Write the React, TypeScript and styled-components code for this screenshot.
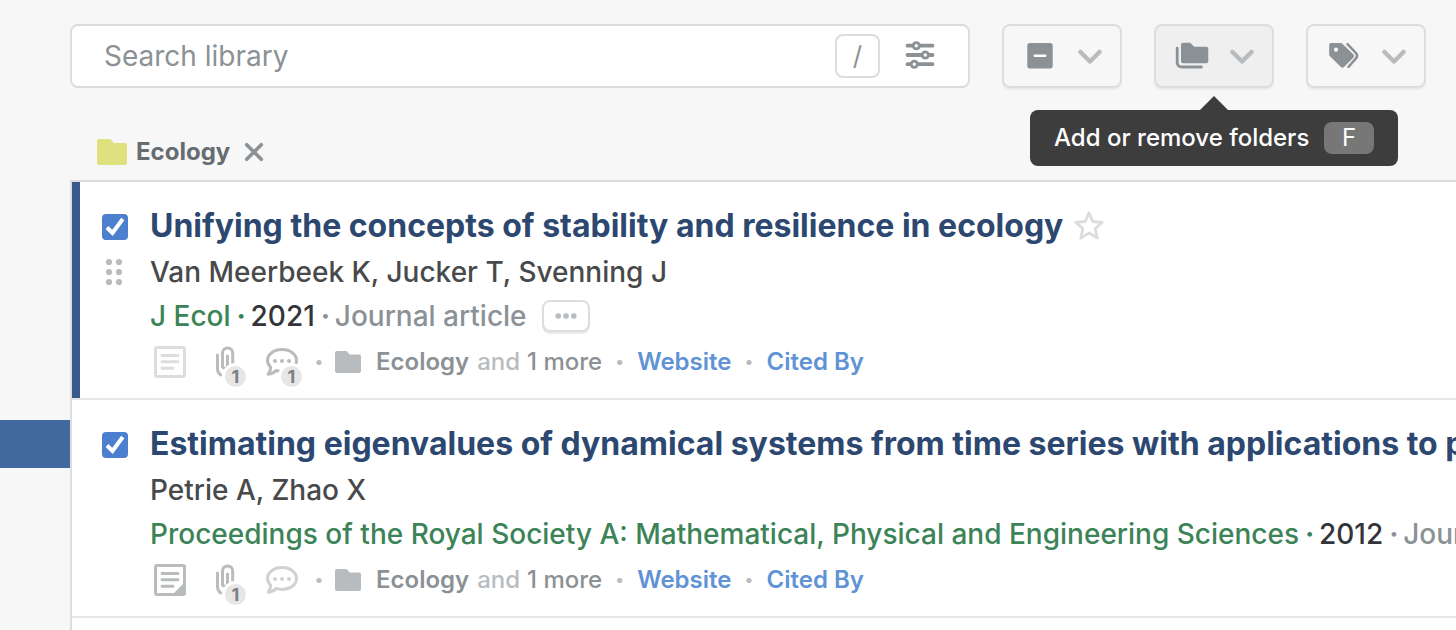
import React from "react";
import styled, { createGlobalStyle } from "styled-components";

const color = {
  page: "#f7f7f7",
  border: "#dddddd",
  grey: "#8b9195",
  light: "#b8bcbf",
  faint: "#dcdddd",
  link: "#5f93d6",
};

const GlobalStyle = createGlobalStyle`
  *, *::before, *::after { box-sizing: border-box; }
  body {
    margin: 0;
    background: ${color.page};
    font-family: Inter, "Liberation Sans", sans-serif;
    overflow: hidden;
  }
  button, input { font: inherit; }
  svg { display: block; flex: none; }
`;

const Page = styled.div`
  display: flex;
  min-height: 100vh;
`;

const Sidebar = styled.nav`
  flex: none;
  width: 70px;
  padding-top: 420px;
`;

const SelectedItem = styled.a`
  display: block;
  height: 48px;
  background: #41689f;
`;

const Main = styled.main`
  display: flex;
  flex-direction: column;
  flex: 1;
  min-width: 0;
`;

const Toolbar = styled.header`
  display: flex;
  gap: 32px;
  padding: 24px 30px 0 0;
`;

const SearchField = styled.div`
  display: flex;
  flex: 1;
  align-items: center;
  min-width: 0;
  height: 64px;
  padding: 0 33px 0 32px;
  background: #fff;
  border: 2px solid ${color.border};
  border-radius: 8px;
`;

const SearchInput = styled.input`
  flex: 1;
  min-width: 0;
  padding: 0;
  border: 0;
  outline: 0;
  background: transparent;
  font-size: 28px;
  line-height: 40px;
  color: #34353a;
  &::placeholder { color: ${color.grey}; opacity: 1; }
`;

const SlashKey = styled.kbd`
  display: grid;
  place-items: center;
  width: 45px;
  height: 44px;
  margin-right: 25px;
  border: 2px solid ${color.border};
  border-radius: 8px;
  font-family: inherit;
  font-size: 26px;
  line-height: 32px;
  color: ${color.grey};
`;

const IconButton = styled.button`
  display: grid;
  place-items: center;
  flex: none;
  padding: 0;
  border: 0;
  background: transparent;
`;

const MenuAnchor = styled.div`
  position: relative;
  flex: none;
`;

const MenuButton = styled.button<{ $active?: boolean }>`
  display: flex;
  align-items: center;
  gap: 20px;
  width: 120px;
  height: 64px;
  padding: 0 18px;
  border: 2px solid ${color.border};
  border-radius: 8px;
  background: ${(p) => (p.$active ? "#efefef" : color.page)};
  box-shadow: 0 2px 0 #ebebeb;
`;

const Tooltip = styled.div`
  position: absolute;
  z-index: 1;
  top: calc(100% + 22px);
  left: 50%;
  display: flex;
  align-items: center;
  justify-content: space-between;
  width: 368px;
  height: 56px;
  padding: 0 24px;
  transform: translateX(-50%);
  border-radius: 8px;
  background: #3d3d3d;
  color: #fff;
  font-size: 24px;
  font-weight: 500;
  line-height: 32px;
  white-space: nowrap;
  &::before {
    content: "";
    position: absolute;
    bottom: 100%;
    left: 50%;
    margin-left: -14px;
    border: 14px solid transparent;
    border-top: 0;
    border-bottom-color: #3d3d3d;
  }
`;

const TooltipKey = styled.kbd`
  width: 50px;
  border-radius: 8px;
  background: #777;
  font-family: inherit;
  font-weight: 400;
  text-align: center;
`;

const FilterBar = styled.div`
  display: flex;
  align-items: center;
  height: 56px;
  margin-top: 36px;
  padding-left: 27px;
`;

const FilterName = styled.span`
  margin: 0 14px 0 9px;
  font-size: 24px;
  font-weight: 700;
  line-height: 32px;
  color: #666c70;
`;

const List = styled.ul`
  flex: 1;
  margin: 0;
  padding: 0;
  list-style: none;
  background: #fff;
  border: solid ${color.border};
  border-width: 2px 0 0 2px;
`;

const Row = styled.li<{ $focused?: boolean }>`
  display: flex;
  border-bottom: 2px solid #e6e6e6;
  background: linear-gradient(#3a5a8c, #3a5a8c) no-repeat 0 0 /
    ${(p) => (p.$focused ? "8px" : "0")} 100%;
`;

const Gutter = styled.div`
  display: flex;
  flex-direction: column;
  align-items: center;
  flex: none;
  gap: 18px;
  width: 26px;
  margin: 32px 22px 0 30px;
`;

const CheckWrap = styled.label`
  display: grid;
  width: 26px;
  height: 26px;
  > * { grid-area: 1 / 1; }
  svg { z-index: 1; pointer-events: none; }
`;

const CheckInput = styled.input`
  appearance: none;
  width: 26px;
  height: 26px;
  margin: 0;
  border: 2px solid ${color.light};
  border-radius: 4px;
  &:checked { border-color: #4c80cf; background: #4c80cf; }
  &:not(:checked) + svg { display: none; }
`;

const Body = styled.div`
  flex: 1;
  min-width: 0;
  padding: 22px 0 12px;
  overflow: hidden;
  white-space: nowrap;
`;

const TitleLine = styled.div`
  display: flex;
  align-items: center;
  gap: 11px;
  height: 44px;
  margin-bottom: 2px;
`;

const Title = styled.h2`
  margin: 0;
  font-size: 32px;
  font-weight: 700;
  line-height: 44px;
  color: #2c4870;
`;

const Authors = styled.div`
  font-size: 28px;
  font-weight: 500;
  line-height: 44px;
  color: #47494b;
`;

const Source = styled.div`
  display: flex;
  align-items: center;
  gap: 6px;
  height: 44px;
  font-size: 28px;
  font-weight: 500;
  line-height: 44px;
  color: ${color.grey};
`;

const Journal = styled.span`
  color: #3c8357;
`;

const SourceDot = styled.span<{ $green?: boolean }>`
  width: 8px;
  font-weight: 700;
  text-align: center;
  color: ${(p) => (p.$green ? "#3c8357" : color.grey)};
`;

const Year = styled.span`
  color: #34353a;
`;

const MoreButton = styled.button`
  display: grid;
  place-items: center;
  width: 48px;
  height: 32px;
  margin-left: 9px;
  padding: 0;
  border: 2px solid ${color.border};
  border-radius: 8px;
  background: #fff;
  box-shadow: 0 2px 0 #ebebeb;
`;

const Meta = styled.div`
  display: flex;
  align-items: center;
  height: 48px;
  padding-left: 4px;
  font-size: 24px;
  font-weight: 500;
  line-height: 32px;
  color: ${color.light};
`;

const MetaIcons = styled.div`
  display: flex;
  gap: 24px;
  margin-right: 16px;
`;

const BadgeAnchor = styled.span`
  position: relative;
  display: flex;
`;

const Badge = styled.span`
  position: absolute;
  left: 12px;
  top: 17px;
  width: 27px;
  height: 27px;
  border: 3px solid #fff;
  border-radius: 50%;
  background: #e6e6e6;
  font-size: 18px;
  font-weight: 700;
  line-height: 22px;
  text-align: center;
  color: #7b8185;
`;

const FolderLabel = styled.span`
  margin: 0 8px 0 15px;
  font-weight: 600;
  color: ${color.grey};
`;

const MoreLabel = styled.span`
  margin-left: 7px;
  color: ${color.grey};
`;

const Dot = styled.span`
  width: 35px;
  font-size: 28px;
  font-weight: 800;
  text-align: center;
`;

const LeadDot = styled(Dot)`
  width: 8px;
  margin-right: 13px;
`;

const MetaLink = styled.a`
  font-weight: 600;
  text-decoration: none;
  color: ${color.link};
`;

const Chevron = () => (
  <svg width="24" height="24" viewBox="0 0 24 24" fill="none" stroke={color.light} strokeWidth="4.5" strokeLinecap="round" strokeLinejoin="round">
    <path d="M2.5 8 12 17.500 21.500 8" />
  </svg>
);

const SlidersIcon = () => (
  <svg width="30" height="30" viewBox="0 0 30 30" stroke={color.grey} fill="#fff">
    <path d="M2.500 4.700H27.500M2.500 14H27.500M2.500 23.200H27.500" strokeWidth="3.800" strokeLinecap="round" />
    <g strokeWidth="2.800">
      <circle cx="11.300" cy="4.700" r="3.100" />
      <circle cx="20.300" cy="14" r="3.100" />
      <circle cx="9.300" cy="23.200" r="3.100" />
    </g>
  </svg>
);

const SelectIcon = () => (
  <svg width="36" height="28" viewBox="0 0 36 28">
    <rect x="5.300" y="1" width="25.400" height="25.600" rx="2.800" fill={color.grey} />
    <path d="M12.800 13.800H23.200" stroke="#fff" strokeWidth="2.600" strokeLinecap="round" />
  </svg>
);

const FoldersIcon = () => (
  <svg width="36" height="28" viewBox="0 0 36 28">
    <path d="M9 .7h7.200l4 4.100H32.300a2 2 0 0 1 2 2V19.300a2 2 0 0 1-2 2H9a2 2 0 0 1-2-2V2.700a2 2 0 0 1 2-2Z" fill={color.grey} />
    <path d="M3.200 6.200V20.500a4.500 4.500 0 0 0 4.500 4.500H27.400" fill="none" stroke={color.grey} strokeWidth="2.800" strokeLinecap="round" />
  </svg>
);

const TagsIcon = () => (
  <svg width="36" height="28" viewBox="0 0 36 28">
    <path fillRule="evenodd" d="M5 1H14.500Q15.800 1 16.700 1.900L27.500 12.500Q28.900 14 27.500 15.500L18 25Q16.500 26.500 15 25L4.200 14.600Q3.200 13.600 3.200 12.300V3Q3.200 1 5 1ZM10 5.600a2.100 2.100 0 1 0 0 4.200 2.100 2.100 0 0 0 0-4.200Z" fill={color.grey} />
    <path d="M21.500 2.200 30 11.200Q32.300 13.800 30 16.400L22.500 24.800" fill="none" stroke={color.grey} strokeWidth="2.500" strokeLinecap="round" />
  </svg>
);

const FolderIcon = ({ width, height, fill }: { width: number; height: number; fill: string }) => (
  <svg width={width} height={height} viewBox="0 0 30 26" preserveAspectRatio="none" fill={fill}>
    <path d="M2.300 0H12.500Q13.600 0 14.400 1L16.800 4H27.700Q30 4 30 6.300V23.700Q30 26 27.700 26H2.300Q0 26 0 23.700V2.300Q0 0 2.300 0Z" />
  </svg>
);

const CloseIcon = () => (
  <svg width="20" height="20" viewBox="0 0 20 20" stroke={color.grey} strokeWidth="3.600" strokeLinecap="round">
    <path d="M2.700 2.700 17.300 17.300M17.300 2.700 2.700 17.300" />
  </svg>
);

const CheckIcon = () => (
  <svg width="26" height="26" viewBox="0 0 26 26" fill="none" stroke="#fff" strokeWidth="4">
    <path d="M5 13.500 10.500 19 20.800 5" />
  </svg>
);

const DragIcon = () => (
  <svg width="20" height="28" viewBox="0 0 20 28" fill={color.light}>
    {[4, 14, 24].map((y) => (
      <React.Fragment key={y}>
        <circle cx="4" cy={y} r="3.100" />
        <circle cx="14" cy={y} r="3.100" />
      </React.Fragment>
    ))}
  </svg>
);

const StarIcon = () => (
  <svg width="30" height="30" viewBox="0 0 30 30" fill="none" stroke={color.faint} strokeWidth="2.800" strokeLinejoin="round">
    <path d="M15 1.800 18.800 10.500 28.300 11.300 21.200 17.600 23.300 27 15 22 6.700 27 8.800 17.600 1.700 11.300 11.200 10.500Z" />
  </svg>
);

const EllipsisIcon = () => (
  <svg width="24" height="6" viewBox="0 0 24 6" fill={color.light}>
    <circle cx="4.200" cy="3" r="2.800" />
    <circle cx="12" cy="3" r="2.800" />
    <circle cx="19.800" cy="3" r="2.800" />
  </svg>
);

const NoteIcon = ({ filled }: { filled?: boolean }) => (
  <svg width="32" height="32" viewBox="0 0 32 32" fill="none" stroke={filled ? color.light : color.faint}>
    <rect x="1.500" y="1.500" width="29" height="29" rx="1.500" strokeWidth="3" />
    <path d="M8 9.500H24M8 15.800H24M8 22.200H19" strokeWidth="2.900" strokeLinecap="round" />
    {filled && <path d="M30 19V30H19Z" fill={color.light} stroke="none" />}
  </svg>
);

const ClipIcon = () => (
  <svg width="32" height="32" viewBox="-4 0 32 32" fill="none" stroke={color.light} strokeWidth="3" strokeLinecap="round">
    <path d="M3.500 9V22.500Q3.500 27 7 29M13.500 10V21a3 3 0 0 1-5 0V7a5.100 5.100 0 0 1 10.200 0V22" />
  </svg>
);

const CommentIcon = ({ faded }: { faded?: boolean }) => (
  <svg width="32" height="32" viewBox="0 0 32 32" fill="none" stroke={faded ? "#cfd1d3" : color.light}>
    <path d="M16 3.600C24.300 3.600 30.500 8.200 30.500 14.500S24.300 25.400 16 25.400Q13 25.400 10.500 24.400Q7 27.800 2.200 28.200Q4.800 25 4.700 21.200Q1.500 18 1.500 14.500C1.500 8.200 7.700 3.600 16 3.600Z" strokeWidth="3" strokeLinejoin="round" />
    <g fill={faded ? "#cfd1d3" : color.light} stroke="none">
      <circle cx="9" cy="15" r="2" />
      <circle cx="16" cy="15" r="2" />
      <circle cx="23" cy="15" r="2" />
    </g>
  </svg>
);

type Paper = {
  title: string;
  authors: string;
  journal: string;
  year: string;
  focused?: boolean;
  hasNote?: boolean;
  comments?: number;
};

const papers: Paper[] = [
  {
    title: "Unifying the concepts of stability and resilience in ecology",
    authors: "Van Meerbeek K, Jucker T, Svenning J",
    journal: "J Ecol",
    year: "2021",
    focused: true,
    comments: 1,
  },
  {
    title: "Estimating eigenvalues of dynamical systems from time series with applications to p",
    authors: "Petrie A, Zhao X",
    journal: "Proceedings of the Royal Society A: Mathematical, Physical and Engineering Sciences",
    year: "2012",
    hasNote: true,
  },
];

const PaperRow = ({ paper }: { paper: Paper }) => (
  <Row $focused={paper.focused}>
    <Gutter>
      <CheckWrap>
        <CheckInput type="checkbox" defaultChecked aria-label={paper.title} />
        <CheckIcon />
      </CheckWrap>
      {paper.focused && <DragIcon />}
    </Gutter>
    <Body>
      <TitleLine>
        <Title>{paper.title}</Title>
        {paper.focused && (
          <IconButton aria-label="Star">
            <StarIcon />
          </IconButton>
        )}
      </TitleLine>
      <Authors>{paper.authors}</Authors>
      <Source>
        <Journal>{paper.journal}</Journal>
        <SourceDot $green>·</SourceDot>
        <Year>{paper.year}</Year>
        <SourceDot>·</SourceDot>
        <span>Journal article</span>
        {paper.focused && (
          <MoreButton aria-label="More">
            <EllipsisIcon />
          </MoreButton>
        )}
      </Source>
      <Meta>
        <MetaIcons>
          <NoteIcon filled={paper.hasNote} />
          <BadgeAnchor>
            <ClipIcon />
            <Badge>1</Badge>
          </BadgeAnchor>
          <BadgeAnchor>
            <CommentIcon faded={!paper.comments} />
            {paper.comments && <Badge>{paper.comments}</Badge>}
          </BadgeAnchor>
        </MetaIcons>
        <LeadDot>·</LeadDot>
        <FolderIcon width={26} height={22} fill={color.light} />
        <FolderLabel>Ecology</FolderLabel>
        <span>and</span>
        <MoreLabel>1 more</MoreLabel>
        <Dot>·</Dot>
        <MetaLink href="#website">Website</MetaLink>
        <Dot>·</Dot>
        <MetaLink href="#cited-by">Cited By</MetaLink>
      </Meta>
    </Body>
  </Row>
);

export default function App() {
  return (
    <Page>
      <GlobalStyle />
      <Sidebar>
        <SelectedItem href="#folder" aria-label="Selected folder" />
      </Sidebar>
      <Main>
        <Toolbar>
          <SearchField>
            <SearchInput type="text" placeholder="Search library" aria-label="Search library" />
            <SlashKey>/</SlashKey>
            <IconButton aria-label="Search options">
              <SlidersIcon />
            </IconButton>
          </SearchField>
          <MenuAnchor>
            <MenuButton aria-label="Select">
              <SelectIcon />
              <Chevron />
            </MenuButton>
          </MenuAnchor>
          <MenuAnchor>
            <MenuButton $active aria-label="Folders">
              <FoldersIcon />
              <Chevron />
            </MenuButton>
            <Tooltip role="tooltip">
              Add or remove folders <TooltipKey>F</TooltipKey>
            </Tooltip>
          </MenuAnchor>
          <MenuAnchor>
            <MenuButton aria-label="Labels">
              <TagsIcon />
              <Chevron />
            </MenuButton>
          </MenuAnchor>
        </Toolbar>
        <FilterBar>
          <FolderIcon width={30} height={26} fill="#dfe07f" />
          <FilterName>Ecology</FilterName>
          <IconButton aria-label="Remove filter">
            <CloseIcon />
          </IconButton>
        </FilterBar>
        <List>
          {papers.map((paper) => (
            <PaperRow key={paper.title} paper={paper} />
          ))}
        </List>
      </Main>
    </Page>
  );
}
